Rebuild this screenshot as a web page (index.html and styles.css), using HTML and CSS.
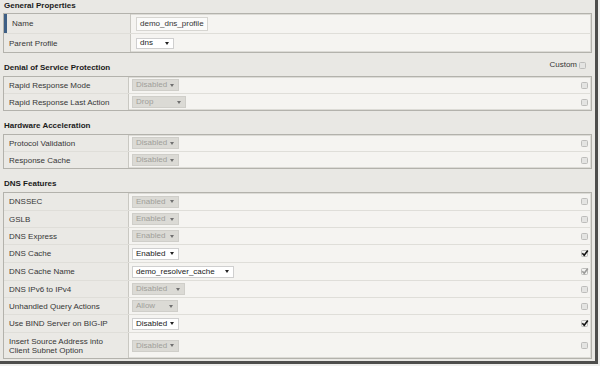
FILE: index.html
```html
<!DOCTYPE html>
<html>
<head>
<meta charset="utf-8">
<link rel="stylesheet" href="styles.css">
</head>
<body>
<div class="panel">
  <div class="sec-head first"><h2>General Properties</h2></div>
  <div class="props general">
    <div class="row req h19"><div class="label">Name</div><div class="value"><span class="input">demo_dns_profile</span></div></div>
    <div class="row h18"><div class="label">Parent Profile</div><div class="value"><span class="sel on w38">dns<i></i></span></div></div>
  </div>

  <div class="sec-head"><h2>Denial of Service Protection</h2><span class="custom">Custom<span class="cb"></span></span></div>
  <div class="props">
    <div class="row h16"><div class="label">Rapid Response Mode</div><div class="value"><span class="sel off w47">Disabled<i></i></span><span class="cb"></span></div></div>
    <div class="row h16"><div class="label">Rapid Response Last Action</div><div class="value"><span class="sel off w54">Drop<i></i></span><span class="cb"></span></div></div>
  </div>

  <div class="sec-head"><h2>Hardware Acceleration</h2></div>
  <div class="props">
    <div class="row h16"><div class="label">Protocol Validation</div><div class="value"><span class="sel off w47">Disabled<i></i></span><span class="cb"></span></div></div>
    <div class="row h16"><div class="label">Response Cache</div><div class="value"><span class="sel off w47">Disabled<i></i></span><span class="cb"></span></div></div>
  </div>

  <div class="sec-head"><h2>DNS Features</h2></div>
  <div class="props">
    <div class="row h17"><div class="label">DNSSEC</div><div class="value"><span class="sel off w47">Enabled<i></i></span><span class="cb"></span></div></div>
    <div class="row h16"><div class="label">GSLB</div><div class="value"><span class="sel off w47">Enabled<i></i></span><span class="cb"></span></div></div>
    <div class="row h16"><div class="label">DNS Express</div><div class="value"><span class="sel off w47">Enabled<i></i></span><span class="cb"></span></div></div>
    <div class="row h17"><div class="label">DNS Cache</div><div class="value"><span class="sel on w47">Enabled<i></i></span><span class="cb checked"><svg viewBox="0 0 8 8"><path d="M1.3 4.2 L3.2 6.2 L6.8 1.4"/></svg></span></div></div>
    <div class="row h17"><div class="label">DNS Cache Name</div><div class="value"><span class="sel on w102">demo_resolver_cache<i></i></span><span class="cb checked dim"><svg viewBox="0 0 8 8"><path d="M1.3 4.2 L3.2 6.2 L6.8 1.4"/></svg></span></div></div>
    <div class="row h16"><div class="label">DNS IPv6 to IPv4</div><div class="value"><span class="sel off w53">Disabled<i></i></span><span class="cb"></span></div></div>
    <div class="row h16"><div class="label">Unhandled Query Actions</div><div class="value"><span class="sel off w46">Allow<i></i></span><span class="cb"></span></div></div>
    <div class="row h17"><div class="label">Use BIND Server on BIG-IP</div><div class="value"><span class="sel on w47">Disabled<i></i></span><span class="cb checked"><svg viewBox="0 0 8 8"><path d="M1.3 4.2 L3.2 6.2 L6.8 1.4"/></svg></span></div></div>
    <div class="row h25"><div class="label">Insert Source Address into<br>Client Subnet Option</div><div class="value"><span class="sel off w47">Disabled<i></i></span><span class="cb"></span></div></div>
  </div>
</div>
</body>
</html>
```

FILE: styles.css
```css
* { box-sizing: border-box; }
html, body { margin: 0; padding: 0; }
body {
  background: #efefed;
  font-family: "Liberation Sans", Arial, sans-serif;
  font-size: 8px;
  color: #363636;
  width: 600px;
  height: 366px;
  overflow: hidden;
}
.panel {
  width: 598px;
  height: 364px;
  background: #e9e8e4;
  border-right: 3px solid #4e4e4c;
  border-bottom: 3px solid #4e4e4c;
  padding: 0 3px 0 3px;
}
.sec-head {
  height: 23px;
  display: flex;
  align-items: flex-end;
  justify-content: space-between;
  padding: 0 0 3px 1px;
}
.sec-head.first { height: 13px; padding-bottom: 2px; }
.sec-head h2 {
  margin: 0;
  font-size: 8px;
  line-height: 10px;
  font-weight: bold;
  color: #1a1a1a;
}
.custom {
  display: flex;
  align-items: center;
  gap: 2px;
  color: #363636;
  padding-right: 6px;
  margin-bottom: 3px;
  line-height: 10px;
}
.props {
  border: 1px solid #b3b2ac;
  box-shadow: inset 0 0 0 1px #dcdbd6;
  background: #f5f4f1;
}
.row {
  display: flex;
  border-top: 1px solid #dfded9;
}
.row:first-child { border-top: none; }
.h16 { height: 17px; }
.h17 { height: 18px; }
.h18 { height: 19px; }
.h19 { height: 20px; }
.h25 { height: 26px; }
.row:first-child.h16 { height: 16px; }
.row:first-child.h17 { height: 17px; }
.row:first-child.h19 { height: 19px; }
.label {
  width: 125px;
  flex: none;
  background: #eae9e5;
  border-right: 1px solid #c9c8c2;
  display: flex;
  align-items: center;
  padding-left: 5px;
  line-height: 9px;
}
.general .label { width: 127px; }
.req .label {
  border-left: 3px solid #3e5f85;
  padding-left: 5px;
}
.value {
  flex: 1;
  display: flex;
  align-items: center;
  justify-content: space-between;
  padding: 0 3px 0 3px;
}
.general .value { padding-left: 5px; }
.input {
  display: inline-flex;
  align-items: center;
  width: 72px;
  height: 14px;
  border: 1px solid #d6d5d1;
  background: #fbfbfa;
  padding-left: 3px;
  color: #333;
  white-space: nowrap;
}
.sel {
  display: inline-flex;
  align-items: center;
  justify-content: space-between;
  height: 12px;
  padding: 0 4px 0 3px;
  border: 1px solid #cfcec9;
  line-height: 10px;
  white-space: nowrap;
}
.sel i {
  flex: none;
  width: 0;
  height: 0;
  border-left: 2px solid transparent;
  border-right: 2px solid transparent;
  border-top: 3px solid #222;
}
.sel.on { background: #fff; color: #222; border-color: #cfcfcf; }
.sel.off { background: #dbdad5; color: #a09f9a; border-color: #cfcec9; }
.sel.off i { border-top-color: #707070; }
.w38 { width: 38px; height: 11px; }
.w46 { width: 46px; }
.w47 { width: 47px; }
.w53 { width: 53px; }
.w54 { width: 54px; }
.w102 { width: 102px; }
.cb {
  display: inline-block;
  width: 7px;
  height: 7px;
  border: 1px solid #bdbdbb;
  border-radius: 1.5px;
  background: #e4e4e2;
  position: relative;
}
.cb svg {
  position: absolute;
  left: -1px;
  top: -2px;
  width: 8px;
  height: 8px;
  fill: none;
  stroke: #111;
  stroke-width: 1.6;
}
.cb.checked { background: #f2f2f0; }
.cb.dim svg { stroke: #9a9a98; }
```
